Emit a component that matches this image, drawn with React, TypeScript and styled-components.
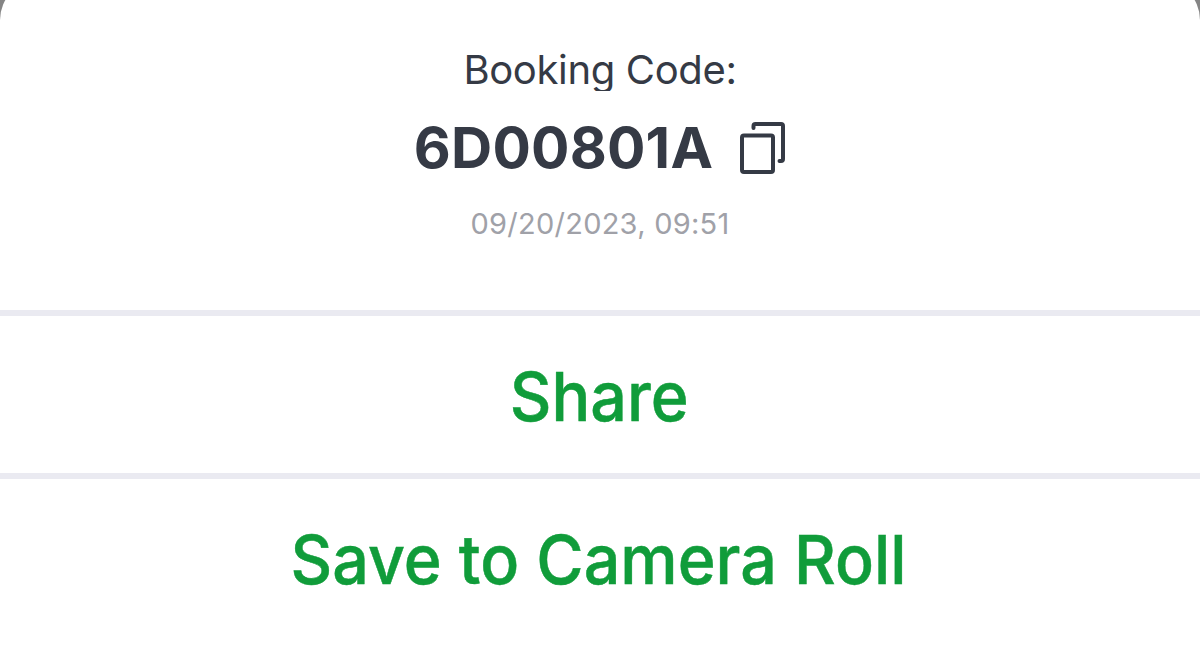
import styled, { createGlobalStyle } from "styled-components";

const GlobalStyle = createGlobalStyle`
  * {
    box-sizing: border-box;
  }
  body {
    margin: 0;
    background: #858585;
  }
`;

const Screen = styled.div`
  display: flex;
  align-items: flex-end;
  width: 1200px;
  height: 658px;
  overflow: hidden;
`;

const Sheet = styled.main`
  display: flex;
  flex-direction: column;
  flex-shrink: 0;
  width: 100%;
  height: 678px;
  padding-top: 20px;
  background: #fff;
  border-radius: 40px 40px 0 0;
  font-family: Inter, "Liberation Sans", sans-serif;
`;

const BookingInfo = styled.section`
  display: flex;
  flex-direction: column;
  align-items: center;
  height: 310px;
  padding-top: 46px;
`;

const Label = styled.p`
  height: 45px;
  margin: 0;
  overflow: hidden;
  color: #353a45;
  font-size: 40px;
  line-height: 48px;
  letter-spacing: -0.35px;
`;

const CodeRow = styled.div`
  display: flex;
  align-items: center;
  gap: 27px;
  height: 72px;
  margin-top: 21px;
`;

const Code = styled.h1`
  margin: 0;
  color: #353a45;
  font-size: 57px;
  font-weight: 700;
  line-height: 72px;
  letter-spacing: 0.2px;
`;

const CopyButton = styled.button`
  display: flex;
  padding: 0;
  border: 0;
  background: none;
  color: #353a45;
`;

const DateText = styled.time`
  margin-top: 22px;
  color: #a0a1a8;
  font-size: 29px;
  line-height: 36px;
  letter-spacing: 0.25px;
`;

const ActionButton = styled.button`
  height: 163px;
  padding: 2px 2px 0 0;
  border: 0;
  border-top: 6px solid #eaeaf1;
  background: none;
  color: #109c3a;
  font-family: inherit;
  font-size: 68px;
  font-weight: 500;
  line-height: 80px;
  -webkit-text-stroke: 0.5px currentColor;
  span {
    display: inline-block;
    transform: scaleX(0.949);
  }
`;

const App = () => {
  return (
    <>
      <GlobalStyle />
      <Screen>
        <Sheet>
          <BookingInfo>
            <Label>Booking Code:</Label>
            <CodeRow>
              <Code>6D00801A</Code>
              <CopyButton aria-label="Copy">
                <svg width="46" height="52" viewBox="0 0 46 52" fill="none" stroke="currentColor" strokeWidth="4">
                  <rect x="2" y="13.5" width="31" height="36.5" rx="2" />
                  <path d="M13.5 6V4Q13.5 2 15.5 2H41Q43 2 43 4V37Q43 39 41 39H39.5" strokeLinecap="round" />
                </svg>
              </CopyButton>
            </CodeRow>
            <DateText>09/20/2023, 09:51</DateText>
          </BookingInfo>
          <ActionButton>
            <span>Share</span>
          </ActionButton>
          <ActionButton>
            <span>Save to Camera Roll</span>
          </ActionButton>
        </Sheet>
      </Screen>
    </>
  );
};

export default App;
